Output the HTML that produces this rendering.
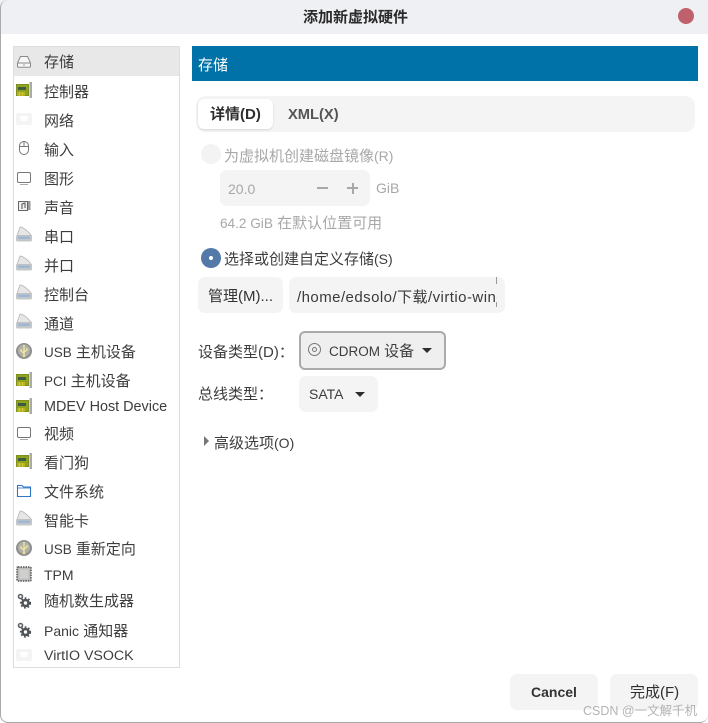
<!DOCTYPE html>
<html lang="zh">
<head>
<meta charset="utf-8">
<title>添加新虚拟硬件</title>
<style>
html,body{margin:0;padding:0;background:#fff}
body{width:708px;height:723px;position:relative;overflow:hidden;font-family:"Liberation Sans","Noto Sans CJK SC",sans-serif;font-size:15px;color:#3d3d3d}
.a{position:absolute}
.t{position:absolute;white-space:nowrap;line-height:20px;height:20px}
.box{position:absolute;background:#f4f4f4;border-radius:7px}
.i{position:absolute;left:16px;width:16px;height:16px;overflow:visible}
.dim{color:#a8a8a8}
.l{font-size:13.5px}
.p{font-size:14px}
</style>
</head>
<body>
<svg width="0" height="0" style="position:absolute">
<defs>
<symbol id="disk" viewBox="0 0 16 16"><path d="M4.500 2.500h7l3 6.500v3.200a1 1 0 0 1-1 1H2.500a1 1 0 0 1-1-1V9z" fill="#f6f6f6" stroke="#8a8a8a"/><path d="M1.500 9h13" stroke="#8a8a8a"/><path d="M7 11h2" stroke="#999"/></symbol>
<symbol id="card" viewBox="0 0 16 16"><rect x="0" y="2" width="13" height="12" fill="#7d8f1c"/><rect x="1" y="3" width="11" height="10" fill="#8fa31f"/><rect x="2" y="5" width="8" height="3" fill="#3c5a44"/><path d="M2 10v4M3.500 10v4M5 10v4M6.500 10v4M8 10v4" stroke="#d9c72e"/><rect x="13.500" y="0" width="2.500" height="16" fill="#aaa"/></symbol>
<symbol id="net" viewBox="0 0 16 16"><rect x="0" y="1" width="16" height="12" rx="2" fill="#f4f4f4"/><path d="M4 4h8v3h-1v2H5V7H4z" fill="#fff"/></symbol>
<symbol id="mouse" viewBox="0 0 16 16"><rect x="3.500" y="0.500" width="9" height="13" rx="4.500" fill="#fff" stroke="#777"/><path d="M3.500 5.500h9M8 .5v5" stroke="#777"/></symbol>
<symbol id="mon" viewBox="0 0 16 16"><rect x="1.500" y="1.500" width="13" height="10" rx="1.500" fill="#fff" stroke="#777"/><path d="M4 13.500h8" stroke="#aaa"/></symbol>
<symbol id="snd" viewBox="0 0 16 16"><rect x="2.500" y="3.500" width="9" height="9" fill="#eee" stroke="#666"/><path d="M6 11V6l3-1v5" fill="none" stroke="#555"/><rect x="12" y="3" width="2.500" height="9" fill="#999"/></symbol>
<symbol id="port" viewBox="0 0 16 16"><path d="M1 9.500 4 1c3 0 8 4 11.500 8.500z" fill="#e6e6e6" stroke="#b0b0b0" stroke-width=".7"/><path d="M0 9.500h16v4.500a1.500 1.500 0 0 1-1.500 1.500h-13A1.500 1.500 0 0 1 0 14z" fill="#c4c7ca"/><rect x="2" y="10.500" width="12" height="2.500" rx="1" fill="#9db7d4"/></symbol>
<symbol id="usb" viewBox="0 0 16 16"><circle cx="8" cy="8" r="8" fill="#8f8f8f"/><circle cx="8" cy="7.500" r="6" fill="#b0b0a8"/><path d="M8 2v11M5 6v2l3 2M11 5v2l-3 2" fill="none" stroke="#f0e6a0" stroke-width="1.400"/><circle cx="8" cy="13" r="1.400" fill="#e6dc96"/></symbol>
<symbol id="folder" viewBox="0 0 16 16"><path d="M1.500 2.500h4.500l1.500 1.500h7v9.500h-13z" fill="#fff" stroke="#2f77c5" stroke-width="1.100"/><path d="M1.500 5h13" stroke="#2f77c5" stroke-width=".8"/></symbol>
<symbol id="tpm" viewBox="0 0 16 16"><rect x="1" y="1" width="14" height="14" rx="1" fill="#bdbdbb" stroke="#555" stroke-width="1.500" stroke-dasharray="1.500 1"/><rect x="3.500" y="3.500" width="9" height="9" fill="#cfcfcd"/></symbol>
<symbol id="gear" viewBox="0 0 16 16"><circle cx="4.500" cy="3.500" r="2" fill="none" stroke="#5f6469" stroke-width="1.600"/><circle cx="9.500" cy="10" r="3" fill="none" stroke="#4f5459" stroke-width="2.600"/><circle cx="9.500" cy="10" r="4.800" fill="none" stroke="#4f5459" stroke-width="1.600" stroke-dasharray="1.800 1.800"/></symbol>
</defs>
</svg>

<!-- window chrome -->
<div class="a" style="left:0;top:0;width:708px;height:34px;background:#eff0f4"></div>
<div class="t" style="left:303px;top:8px;font-weight:700;color:#2a2a2a">添加新虚拟硬件</div>
<div class="a" style="left:678px;top:8px;width:16px;height:16px;border-radius:50%;background:#c0606c"></div>
<div class="a" style="left:0;top:0;width:708px;height:723px;box-sizing:border-box;border-left:1px solid #aaa;border-bottom:1px solid #a8a8a8;border-radius:8px 0 8px 8px"></div>

<!-- sidebar -->
<div class="a" style="left:13px;top:46px;width:167px;height:622px;box-sizing:border-box;border:1px solid #dedede;background:#fff"></div>
<div class="a" style="left:14px;top:47px;width:165px;height:29px;background:#e8e8e8"></div>

<svg class="i" style="top:54px"><use href="#disk"/></svg><div class="t" style="left:44px;top:53px">存储</div>
<svg class="i" style="top:82px"><use href="#card"/></svg><div class="t" style="left:44px;top:83px">控制器</div>
<svg class="i" style="top:112px"><use href="#net"/></svg><div class="t" style="left:44px;top:112px">网络</div>
<svg class="i" style="top:141px"><use href="#mouse"/></svg><div class="t" style="left:44px;top:141px">输入</div>
<svg class="i" style="top:171px"><use href="#mon"/></svg><div class="t" style="left:44px;top:170px">图形</div>
<svg class="i" style="top:198px"><use href="#snd"/></svg><div class="t" style="left:44px;top:199px">声音</div>
<svg class="i" style="top:226px"><use href="#port"/></svg><div class="t" style="left:44px;top:228px">串口</div>
<svg class="i" style="top:255px"><use href="#port"/></svg><div class="t" style="left:44px;top:257px">并口</div>
<svg class="i" style="top:284px"><use href="#port"/></svg><div class="t" style="left:44px;top:286px">控制台</div>
<svg class="i" style="top:313px"><use href="#port"/></svg><div class="t" style="left:44px;top:315px">通道</div>
<svg class="i" style="top:343px"><use href="#usb"/></svg><div class="t" style="left:44px;top:343px"><span class="l">USB</span> 主机设备</div>
<svg class="i" style="top:372px"><use href="#card"/></svg><div class="t" style="left:44px;top:372px"><span class="l">PCI</span> 主机设备</div>
<svg class="i" style="top:398px"><use href="#card"/></svg><div class="t" style="left:44px;top:397px;font-size:14.400px">MDEV Host Device</div>
<svg class="i" style="top:426px"><use href="#mon"/></svg><div class="t" style="left:44px;top:425px">视频</div>
<svg class="i" style="top:453px"><use href="#card"/></svg><div class="t" style="left:44px;top:454px">看门狗</div>
<svg class="i" style="top:483px"><use href="#folder"/></svg><div class="t" style="left:44px;top:483px">文件系统</div>
<svg class="i" style="top:510px"><use href="#port"/></svg><div class="t" style="left:44px;top:512px">智能卡</div>
<svg class="i" style="top:540px"><use href="#usb"/></svg><div class="t" style="left:44px;top:540px"><span class="l">USB</span> 重新定向</div>
<svg class="i" style="top:566px"><use href="#tpm"/></svg><div class="t" style="left:44px;top:565px;font-size:14px">TPM</div>
<svg class="i" style="top:593px"><use href="#gear"/></svg><div class="t" style="left:44px;top:592px">随机数生成器</div>
<svg class="i" style="top:622px"><use href="#gear"/></svg><div class="t" style="left:44px;top:621px"><span class="l" style="font-size:14px">Panic</span> 通知器</div>
<svg class="i" style="top:648px"><use href="#net"/></svg><div class="t" style="left:44px;top:646px;font-size:14.200px">VirtIO VSOCK</div>

<!-- header -->
<div class="a" style="left:192px;top:46px;width:506px;height:35px;background:#0072a8"></div>
<div class="t" style="left:198px;top:56px;color:#fff">存储</div>

<!-- tabs -->
<div class="box" style="left:196px;top:96px;width:499px;height:36px;border-radius:10px"></div>
<div class="a" style="left:198px;top:99px;width:75px;height:30px;background:#fff;border-radius:6px;box-shadow:0 1px 2px rgba(0,0,0,.12)"></div>
<div class="t" style="left:210px;top:105px;font-weight:700;color:#2e2e2e;font-size:15px">详情(D)</div>
<div class="t" style="left:288px;top:105px;font-weight:700;color:#555;font-size:14.700px">XML(X)</div>

<!-- disabled radio -->
<div class="a" style="left:201px;top:144px;width:20px;height:20px;border-radius:50%;background:#f3f3f3"></div>
<div class="t dim" style="left:224px;top:146px">为虚拟机创建磁盘镜像<span class="p">(R)</span></div>
<div class="box" style="left:220px;top:170px;width:150px;height:36px"></div>
<div class="t dim" style="left:228px;top:179px;font-size:14px">20.0</div>
<div class="a" style="left:317px;top:187px;width:11px;height:2px;background:#a8a8a8"></div>
<div class="a" style="left:347px;top:187px;width:11px;height:2px;background:#a8a8a8"></div>
<div class="a" style="left:351.500px;top:182.500px;width:2px;height:11px;background:#a8a8a8"></div>
<div class="t dim" style="left:376px;top:178px;font-size:14px">GiB</div>
<div class="t dim" style="left:220px;top:214px"><span style="font-size:13.600px">64.2 GiB</span> 在默认位置可用</div>

<!-- custom radio -->
<div class="a" style="left:201px;top:248px;width:20px;height:20px;border-radius:50%;background:#5379a8"></div>
<div class="a" style="left:209px;top:256px;width:4px;height:4px;border-radius:50%;background:#fff"></div>
<div class="t" style="left:224px;top:249px">选择或创建自定义存储<span class="p">(S)</span></div>

<div class="box" style="left:198px;top:277px;width:85px;height:36px"></div>
<div class="t" style="left:208px;top:287px;color:#333">管理(M)...</div>
<div class="box" style="left:289px;top:277px;width:216px;height:36px"></div>
<div class="a" style="left:297px;top:288px;width:200px;height:20px;overflow:hidden;white-space:nowrap;line-height:20px;color:#3a3a3a;letter-spacing:.45px">/home/edsolo/下载/virtio-win-0.1.240.iso</div>
<div class="a" style="left:496px;top:277px;width:1px;height:7px;background:#999"></div>
<div class="a" style="left:496px;top:302px;width:1px;height:5px;background:#999"></div>

<!-- combos -->
<div class="t" style="left:198px;top:343px">设备类型(D)：</div>
<div class="a" style="left:299px;top:331px;width:147px;height:39px;box-sizing:border-box;background:#efefef;border:2px solid #aaa;border-radius:6px"></div>
<svg class="a" style="left:307px;top:342px" width="15" height="15"><circle cx="7.500" cy="7.500" r="6" fill="none" stroke="#777"/><circle cx="7.500" cy="7.500" r="2" fill="none" stroke="#777"/></svg>
<div class="t" style="left:329px;top:342px"><span class="l">CDROM</span> 设备</div>
<div class="a" style="left:422px;top:348px;width:0;height:0;border-left:5px solid transparent;border-right:5px solid transparent;border-top:5px solid #2e2e2e"></div>

<div class="t" style="left:198px;top:385px">总线类型：</div>
<div class="box" style="left:299px;top:376px;width:79px;height:36px"></div>
<div class="t" style="left:309px;top:384px;font-size:14px">SATA</div>
<div class="a" style="left:355px;top:392px;width:0;height:0;border-left:5px solid transparent;border-right:5px solid transparent;border-top:5px solid #2e2e2e"></div>

<!-- expander -->
<div class="a" style="left:204px;top:436px;width:0;height:0;border-top:5px solid transparent;border-bottom:5px solid transparent;border-left:5px solid #777"></div>
<div class="t" style="left:214px;top:433px">高级选项<span class="p">(O)</span></div>

<!-- buttons -->
<div class="box" style="left:510px;top:674px;width:88px;height:36px"></div>
<div class="t" style="left:531px;top:682px;font-weight:700;font-size:14px;color:#333">Cancel</div>
<div class="box" style="left:610px;top:674px;width:88px;height:36px"></div>
<div class="t" style="left:630px;top:683px;color:#2e2e2e">完成(F)</div>

<!-- watermark -->
<div class="t" style="left:583px;top:701px;font-size:12.500px;color:rgba(150,150,150,.7)">CSDN @一文解千机</div>
</body>
</html>
